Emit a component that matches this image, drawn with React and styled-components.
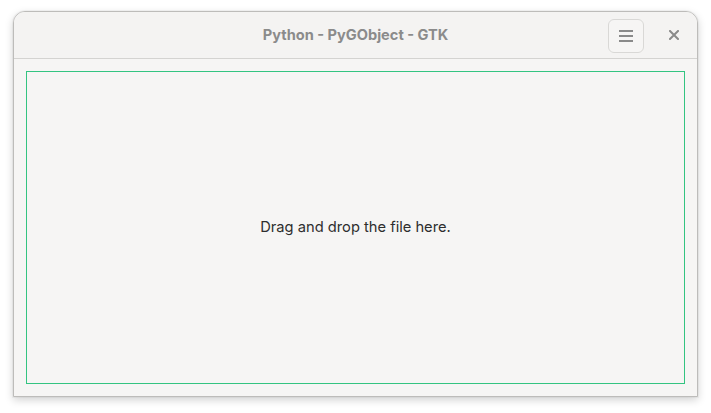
import React from 'react';
import styled, { createGlobalStyle } from 'styled-components';

const GlobalStyle = createGlobalStyle`
    html, body {
        margin: 0;
        padding: 0;
        background: #ffffff;
        font-family: Inter, 'Noto Sans', sans-serif;
    }
`;

const Page = styled.div`
    width: 711px;
    height: 413px;
    padding: 11px 0 0 13px;
    box-sizing: border-box;
`;

const Window = styled.div`
    width: 685px;
    height: 386px;
    box-sizing: border-box;
    display: flex;
    flex-direction: column;
    background: #f6f5f4;
    border: 1px solid #bdbcba;
    border-radius: 12px 12px 0 0;
    box-shadow: 0 3px 9px rgba(0, 0, 0, 0.18), 0 0 0 1px rgba(0, 0, 0, 0.03);
    overflow: hidden;
`;

const HeaderBar = styled.div`
    height: 46px;
    flex-shrink: 0;
    display: grid;
    grid-template-columns: 1fr auto 1fr;
    align-items: center;
    border-bottom: 1px solid #d4d3d1;
    background: #f4f3f2;
    padding: 0 6px;
`;

const Title = styled.div`
    grid-column: 2;
    font-size: 14.6px;
    font-weight: 700;
    color: #8b8b8b;
`;

const Controls = styled.div`
    grid-column: 3;
    display: flex;
    align-items: center;
    justify-content: flex-end;
    gap: 18px;
`;

const MenuButton = styled.button`
    width: 36px;
    height: 34px;
    box-sizing: border-box;
    border: 1px solid #d9d8d6;
    border-radius: 6px;
    background: #f6f5f4;
    display: flex;
    align-items: center;
    justify-content: center;
    padding: 0;
    margin-top: 1px;
`;

const CloseButton = styled.button`
    width: 24px;
    height: 24px;
    border: none;
    background: transparent;
    display: flex;
    align-items: center;
    justify-content: center;
    padding: 0;
    margin-right: 5px;
`;

const Content = styled.div`
    flex: 1;
    padding: 12px;
    display: flex;
`;

const DropZone = styled.div`
    flex: 1;
    border: 1px solid #33c481;
    display: flex;
    align-items: center;
    justify-content: center;
    font-size: 14.7px;
    color: #2e2e2e;
    padding-bottom: 2px;
`;

const App = () => {
    return (
        <>
            <GlobalStyle />
            <Page>
                <Window>
                    <HeaderBar>
                        <Title>Python - PyGObject - GTK</Title>
                        <Controls>
                            <MenuButton>
                                <svg width="16" height="14" viewBox="0 0 16 14">
                                    <rect x="1" y="1" width="14" height="2" fill="#8a8a8a" />
                                    <rect x="1" y="6" width="14" height="2" fill="#8a8a8a" />
                                    <rect x="1" y="11" width="14" height="2" fill="#8a8a8a" />
                                </svg>
                            </MenuButton>
                            <CloseButton>
                                <svg width="10" height="10" viewBox="0 0 10 10">
                                    <path d="M1 1 L9 9 M9 1 L1 9" stroke="#8a8a8a" strokeWidth="2" strokeLinecap="square" />
                                </svg>
                            </CloseButton>
                        </Controls>
                    </HeaderBar>
                    <Content>
                        <DropZone>Drag and drop the file here.</DropZone>
                    </Content>
                </Window>
            </Page>
        </>
    );
};

export default App;
